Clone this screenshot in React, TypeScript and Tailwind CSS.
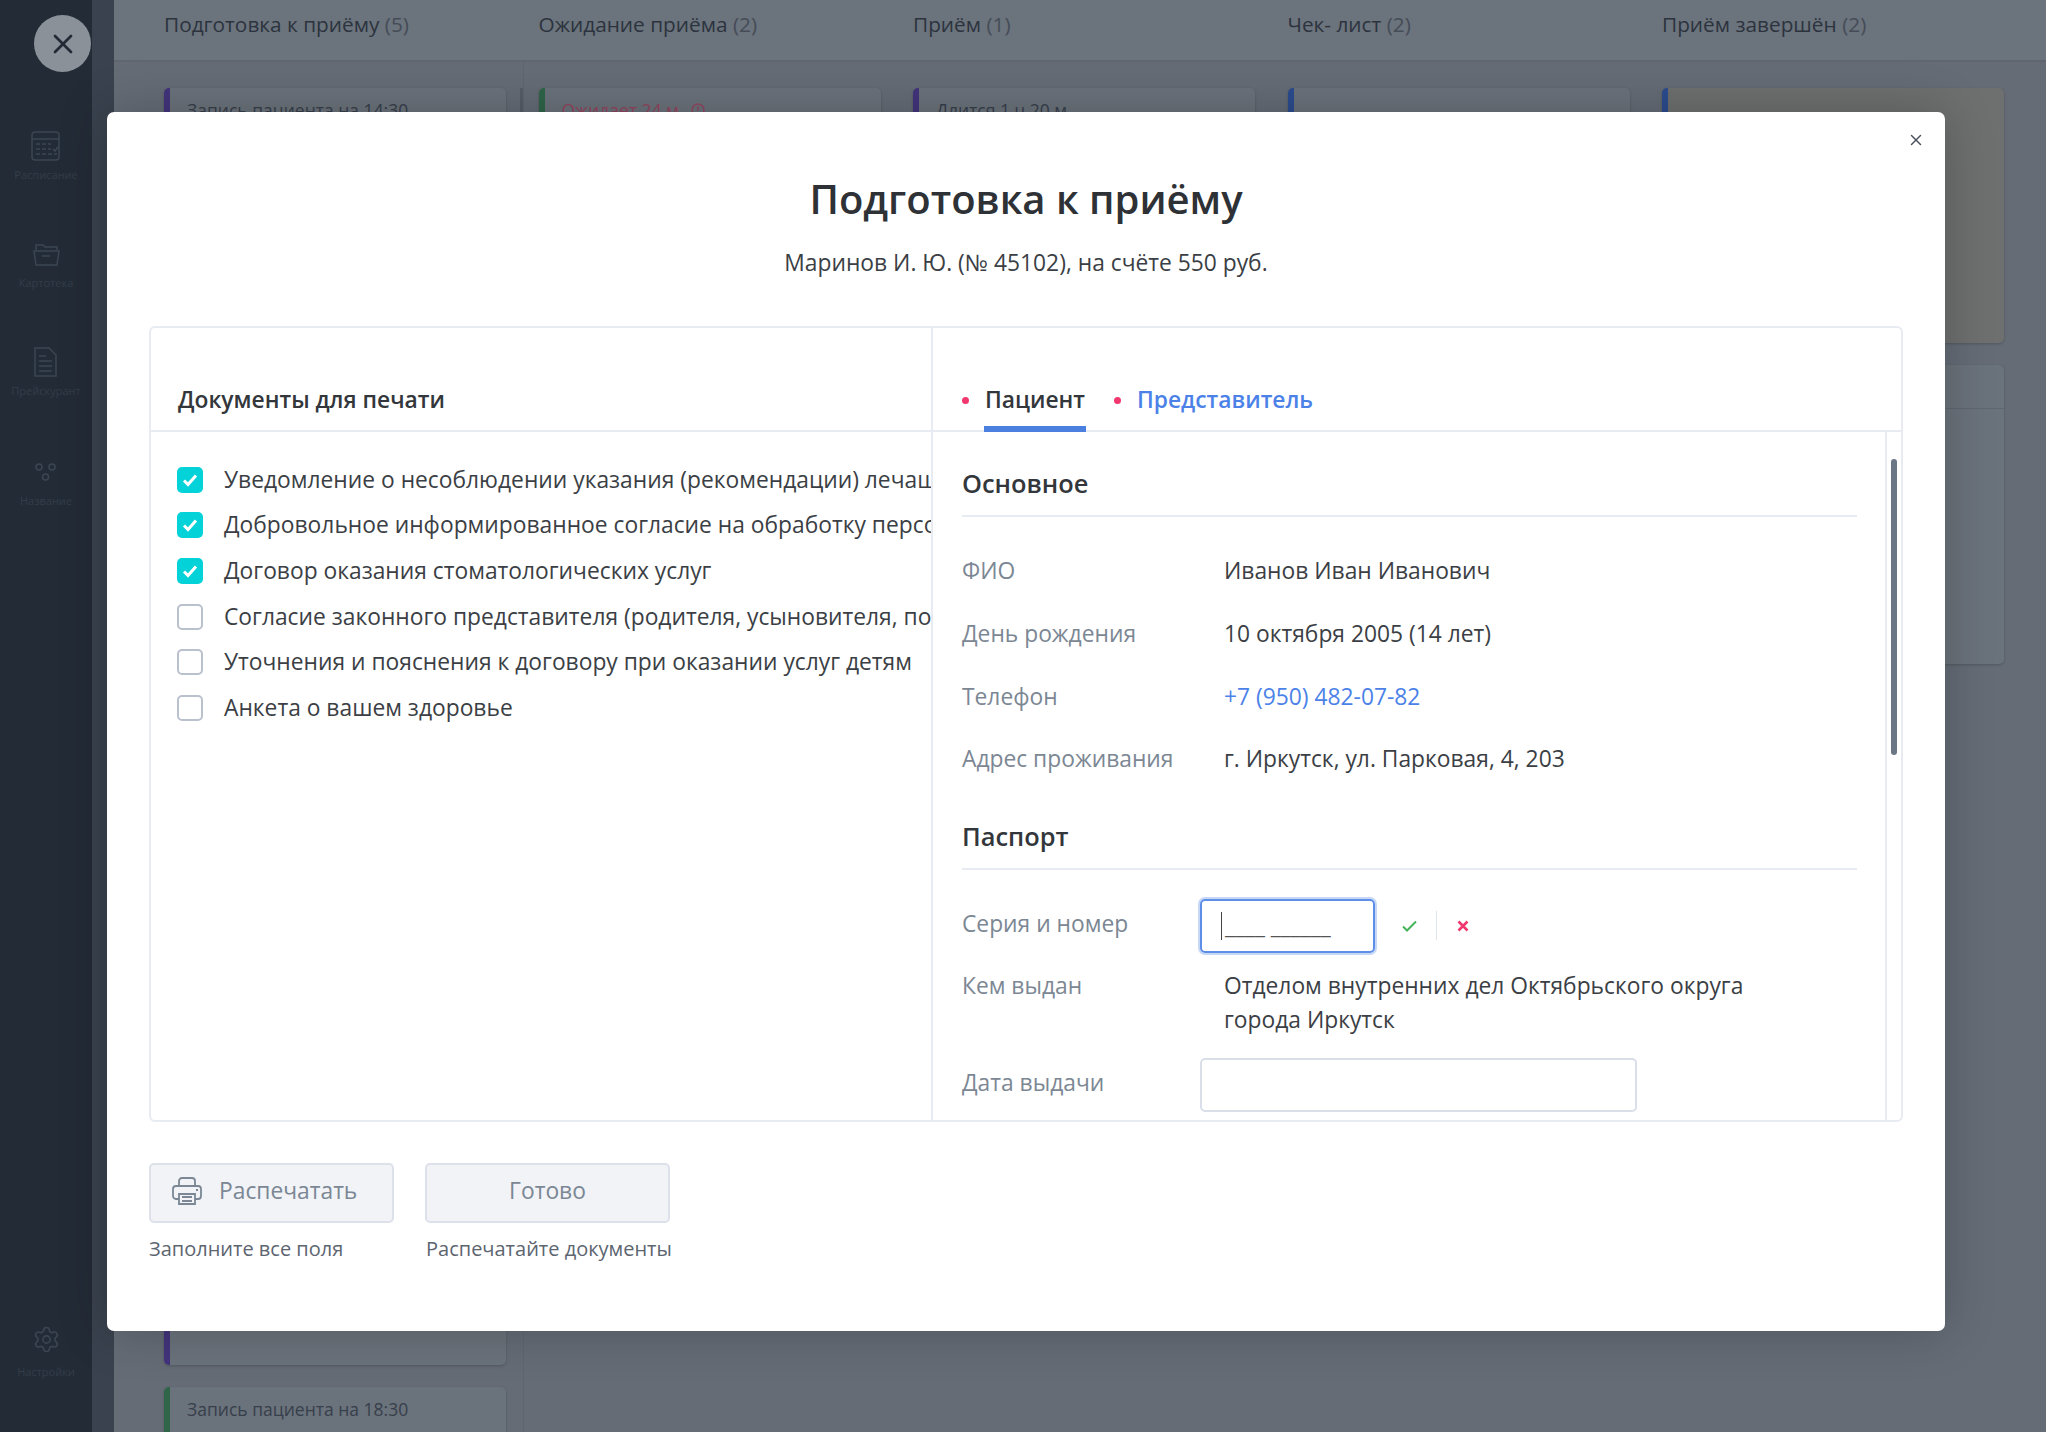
import React from "react";
import { Settings, X } from "lucide-react";

const columns = [
  { title: "Подготовка к приёму", count: 5 },
  { title: "Ожидание приёма", count: 2 },
  { title: "Приём", count: 1 },
  { title: "Чек- лист", count: 2 },
  { title: "Приём завершён", count: 2 },
];

const documents = [
  { label: "Уведомление о несоблюдении указания (рекомендации) лечащего врача", checked: true },
  { label: "Добровольное информированное согласие на обработку персональных данных", checked: true },
  { label: "Договор оказания стоматологических услуг", checked: true },
  { label: "Согласие законного представителя (родителя, усыновителя, попечителя)", checked: false },
  { label: "Уточнения и пояснения к договору при оказании услуг детям", checked: false },
  { label: "Анкета о вашем здоровье", checked: false },
];

const mainRows = [
  { label: "ФИО", value: "Иванов Иван Иванович" },
  { label: "День рождения", value: "10 октября 2005 (14 лет)" },
  { label: "Телефон", value: "+7 (950) 482-07-82", link: true },
  { label: "Адрес проживания", value: "г. Иркутск, ул. Парковая, 4, 203" },
];

const CalendarIcon = () => (
  <svg width="29" height="30" viewBox="0 0 29 30" fill="none" stroke="#3c4653" strokeWidth="1.5">
    <rect x="1" y="1" width="27" height="28" rx="3" />
    <path d="M1 8h27" />
    <path d="M5 13h4M11 13h4M17 13h3M5 18h4M11 18h4M17 18h3M5 23h4M11 23h4M17 23h4M23 23h3M22 18l2 2 3-4" />
  </svg>
);

const FolderIcon = () => (
  <svg width="27" height="23" viewBox="0 0 27 23" fill="none" stroke="#3c4653" strokeWidth="1.5">
    <path d="M3 7V2h7l2 2h12v3" />
    <path d="M1 8h25l-2 14H3z" />
    <path d="M9 13h8" />
  </svg>
);

const FileIcon = () => (
  <svg width="23" height="30" viewBox="0 0 23 30" fill="none" stroke="#3c4653" strokeWidth="1.5">
    <path d="M1 1h14l7 7v21H1z" />
    <path d="M5 9h7M5 14h13M5 19h13M5 24h13" />
  </svg>
);

const CirclesIcon = () => (
  <svg width="22" height="20" viewBox="0 0 22 20" fill="none" stroke="#3c4653" strokeWidth="1.5">
    <circle cx="4" cy="5" r="3" />
    <circle cx="17" cy="5" r="3" />
    <circle cx="10.5" cy="15" r="3" />
  </svg>
);

const PrinterIcon = () => (
  <svg width="30" height="30" viewBox="0 0 30 30" fill="none" stroke="#7b8794" strokeWidth="1.8">
    <path d="M7 10V5a3 3 0 0 1 3-3h10a3 3 0 0 1 3 3v5" />
    <path d="M7 23H4a3 3 0 0 1-3-3v-7a3 3 0 0 1 3-3h22a3 3 0 0 1 3 3v7a3 3 0 0 1-3 3h-3" />
    <path d="M7 18h16v10H7zM10 21h10M10 25h10" />
    <path d="M24 14h2" />
  </svg>
);

const NavItem = ({ icon, label, className, labelClass }: { icon: React.ReactNode; label: string; className: string; labelClass?: string }) => (
  <div className={`flex flex-col items-center ${className}`}>
    <div className="flex h-[30px] items-center justify-center">{icon}</div>
    <span className={`text-[11px] leading-[16px] text-[#333d49] ${labelClass ?? "mt-[6px]"}`}>{label}</span>
  </div>
);

const Card = ({ bar, text, textClass, className, children }: { bar: string; text?: string; textClass?: string; className: string; children?: React.ReactNode }) => (
  <div className={`flex w-[342px] overflow-hidden rounded-[5px] bg-[#6a727b] shadow-[0_1px_3px_rgba(0,0,0,0.2)] ${className}`}>
    <div className={`w-[6px] shrink-0 ${bar}`} />
    {text && (
      <div className={`flex items-start gap-[8px] pl-[17px] pt-[10px] text-[17.5px] font-medium leading-[24px] ${textClass ?? "text-[#373f4b]"}`}>
        {text}
        {children}
      </div>
    )}
  </div>
);

const Field = ({ label, value, link }: { label: string; value: string; link?: boolean }) => (
  <div className="flex h-[62.7px] items-center">
    <div className="w-[262px] text-[#7c8794]">{label}</div>
    <div className={link ? "text-[#4c82e8]" : "text-[#3b3f45]"}>{value}</div>
  </div>
);

export default function App() {
  return (
    <div className="relative flex h-[1432px] w-[2046px] overflow-hidden bg-[#656c76] font-['Open_Sans',sans-serif]">
      {/* sidebar */}
      <aside className="flex w-[92px] shrink-0 flex-col items-center bg-[#232b36]">
        <NavItem icon={<CalendarIcon />} label="Расписание" className="mt-[131px]" />
        <NavItem icon={<FolderIcon />} label="Картотека" className="mt-[56px]" />
        <NavItem icon={<FileIcon />} label="Прейскурант" className="mt-[56px]" />
        <NavItem icon={<CirclesIcon />} label="Название" className="mt-[58px]" />
        <NavItem icon={<Settings size={29} strokeWidth={1.3} color="#3c4653" />} label="Настройки" labelClass="mt-[10px]" className="mt-auto mb-[52px]" />
      </aside>
      <div className="w-[22px] shrink-0 bg-[#39424e]" />

      {/* board behind the dialog */}
      <main className="flex min-w-0 flex-1 flex-col">
        <header className="flex h-[62px] shrink-0 items-center border-b-2 border-[#5f6670] bg-[#6b737c] pl-[50px] pb-[10px]">
          {columns.map((c) => (
            <div key={c.title} className="w-[374.5px] shrink-0 text-[20.8px] font-medium text-[#2c333e]">
              {c.title} <span className="font-normal text-[#454c57]">({c.count})</span>
            </div>
          ))}
        </header>
        <div className="flex flex-1 pl-[50px] pt-[26px]">
          <div className="relative flex w-[374.5px] shrink-0 flex-col">
            <Card bar="bg-[#43347c]" text="Запись пациента на 14:30" className="h-[1277px]" />
            <Card bar="bg-[#2f6549]" text="Запись пациента на 18:30" className="mt-[22px] h-[120px]" />
            <div className="absolute left-[356px] top-0 h-[200px] w-[4px] bg-[#555d68]" />
            <div className="absolute bottom-0 left-[359px] top-[-26px] w-px bg-[#5f6670]" />
          </div>
          <div className="w-[374.5px] shrink-0">
            <Card bar="bg-[#2f6549]" text="Ожидает 24 м." textClass="text-[#94455f]" className="h-[200px]">
              <svg className="mt-[5px]" width="14" height="14" viewBox="0 0 14 14" fill="none" stroke="#94455f" strokeWidth="1.5">
                <circle cx="7" cy="7" r="6" />
                <path d="M7 3.5v4M7 9.5v1" />
              </svg>
            </Card>
          </div>
          <div className="w-[374.5px] shrink-0">
            <Card bar="bg-[#43347c]" text="Длится 1 ч 20 м" className="h-[200px]" />
          </div>
          <div className="w-[374.5px] shrink-0">
            <Card bar="bg-[#2c4c8f]" className="h-[200px]" />
          </div>
          <div className="flex w-[374.5px] shrink-0 flex-col">
            <Card bar="bg-[#2c4c8f]" className="h-[255px] !bg-[#6d706f]" />
            <div className="mt-[22px] h-[299px] w-[342px] rounded-[5px] bg-[#6a727b] shadow-[0_1px_3px_rgba(0,0,0,0.2)]">
              <div className="h-[44px] border-b border-[#5f6670]" />
            </div>
          </div>
        </div>
      </main>

      {/* close button of the board overlay */}
      <button className="absolute left-[34px] top-[15px] flex h-[57px] w-[57px] items-center justify-center rounded-full bg-[#8b9199]">
        <X size={32} strokeWidth={2} color="#232b36" />
      </button>

      {/* dialog */}
      <div className="absolute left-[107px] top-[112px] flex h-[1219px] w-[1838px] flex-col rounded-[7px] bg-white px-[42px] text-[22.8px] leading-[34px] shadow-[0_0_50px_rgba(0,0,0,0.22)]">
        <button className="absolute right-[20px] top-[19px] text-[#4a525e]">
          <X size={18} strokeWidth={2} />
        </button>
        <h1 className="mt-[59px] text-center text-[40px] font-semibold leading-[56px] text-[#2e3135]">Подготовка к приёму</h1>
        <p className="mt-[19px] text-center text-[#3b3f45]">Маринов И. Ю. (№ 45102), на счёте 550 руб.</p>

        <div className="mt-[46px] flex h-[796px] overflow-hidden rounded-[6px] border-2 border-[#e8ebf1]">
          {/* documents */}
          <div className="flex w-[782px] shrink-0 flex-col overflow-hidden border-r-2 border-[#e8ebf1]">
            <div className="flex h-[104px] shrink-0 items-end border-b-2 border-[#e8ebf1] pb-[13px] pl-[27px] font-semibold text-[#33373c]">
              Документы для печати
            </div>
            <div className="flex flex-col pl-[26px] pt-[25px]">
              {documents.map((d) => (
                <label key={d.label} className="flex h-[45.67px] items-center whitespace-nowrap text-[#3b3f45]">
                  <span
                    className={
                      d.checked
                        ? "flex h-[26px] w-[26px] shrink-0 items-center justify-center rounded-[5px] bg-[#03d2d9]"
                        : "h-[26px] w-[26px] shrink-0 rounded-[5px] border-2 border-[#b9c1cd]"
                    }
                  >
                    {d.checked && (
                      <svg width="16" height="14" viewBox="0 0 16 14" fill="none" stroke="#fff" strokeWidth="3">
                        <path d="M2 7.5l4 4 8-9" />
                      </svg>
                    )}
                  </span>
                  <span className="ml-[21px]">{d.label}</span>
                </label>
              ))}
            </div>
          </div>

          {/* patient */}
          <div className="flex min-w-0 flex-1 flex-col">
            <div className="flex h-[104px] shrink-0 items-end border-b-2 border-[#e8ebf1] pl-[29px]">
              <div className="mb-[13px] flex h-[34px] items-center">
                <span className="h-[7px] w-[7px] rounded-full bg-[#f0386f]" />
              </div>
              <div className="relative ml-[15px] w-[102px] pb-[13px] text-center font-semibold text-[#33373c]">
                Пациент
                <span className="absolute bottom-[-2px] left-0 h-[6px] w-full bg-[#4a7fe0]" />
              </div>
              <div className="mb-[13px] ml-[28px] flex h-[34px] items-center">
                <span className="h-[7px] w-[7px] rounded-full bg-[#f0386f]" />
              </div>
              <div className="ml-[16px] pb-[13px] font-semibold text-[#4c82e8]">Представитель</div>
            </div>
            <div className="flex min-h-0 flex-1 overflow-hidden">
              <div className="w-[952px] shrink-0 overflow-hidden pl-[29px] pr-[28px]">
                <h2 className="mt-[33px] text-[25.4px] font-semibold leading-[36px] text-[#33373c]">Основное</h2>
                <div className="mt-[14px] h-[2px] bg-[#e8ebf1]" />
                <div className="mt-[23px]">
                  {mainRows.map((r) => (
                    <Field key={r.label} {...r} />
                  ))}
                </div>
                <h2 className="mt-[27px] text-[25.4px] font-semibold leading-[36px] text-[#33373c]">Паспорт</h2>
                <div className="mt-[14px] h-[2px] bg-[#e8ebf1]" />
                <div className="mt-[29px] flex items-center">
                  <div className="w-[238px] pb-[3px] text-[#7c8794]">Серия и номер</div>
                  <div className="flex h-[54px] w-[175px] items-center rounded-[5px] border-2 border-[#5f8ee8] pl-[19px] shadow-[0_0_0_2px_rgba(95,142,232,0.35)]">
                    <span className="mr-[3px] h-[28px] w-px bg-[#444]" />
                    <span className="text-[#555]">____ ______</span>
                  </div>
                  <svg className="ml-[27px]" width="15" height="12" viewBox="0 0 15 12" fill="none" stroke="#46b35c" strokeWidth="2">
                    <path d="M1 6.5l4 4 9-9" />
                  </svg>
                  <span className="ml-[19px] h-[29px] w-px bg-[#dfe3ea]" />
                  <svg className="ml-[20px]" width="12" height="12" viewBox="0 0 12 12" fill="none" stroke="#f0386f" strokeWidth="2.6">
                    <path d="M1.5 1.5l9 9M10.5 1.5l-9 9" />
                  </svg>
                </div>
                <div className="mt-[16px] flex">
                  <div className="w-[262px] text-[#7c8794]">Кем выдан</div>
                  <div className="w-[560px] text-[#3b3f45]">Отделом внутренних дел Октябрьского округа города Иркутск</div>
                </div>
                <div className="mt-[21px] flex items-center">
                  <div className="w-[238px] pb-[3px] text-[#7c8794]">Дата выдачи</div>
                  <div className="h-[54px] w-[437px] rounded-[5px] border-2 border-[#d9dee8]" />
                </div>
              </div>
              <div className="flex-1 border-l-2 border-[#e8ebf1] pl-[4px] pt-[27px]">
                <div className="h-[296px] w-[6px] rounded-full bg-[#6b7784]" />
              </div>
            </div>
          </div>
        </div>

        {/* actions */}
        <div className="mt-[41px] flex gap-[31px]">
          <div className="w-[245px]">
            <button className="flex h-[60px] w-full items-center rounded-[5px] border-2 border-[#dde1ea] bg-[#f1f3f7] pb-[5px] pl-[21px] text-[#7b8794]">
              <PrinterIcon />
              <span className="ml-[17px]">Распечатать</span>
            </button>
            <div className="mt-[12px] text-[20px] leading-[28px] text-[#5c6570]">Заполните все поля</div>
          </div>
          <div className="w-[245px]">
            <button className="h-[60px] w-full rounded-[5px] border-2 border-[#dde1ea] bg-[#f1f3f7] pb-[5px] text-[#7b8794]">Готово</button>
            <div className="mt-[12px] ml-[1px] whitespace-nowrap text-[20px] leading-[28px] text-[#5c6570]">Распечатайте документы</div>
          </div>
        </div>
      </div>
    </div>
  );
}
